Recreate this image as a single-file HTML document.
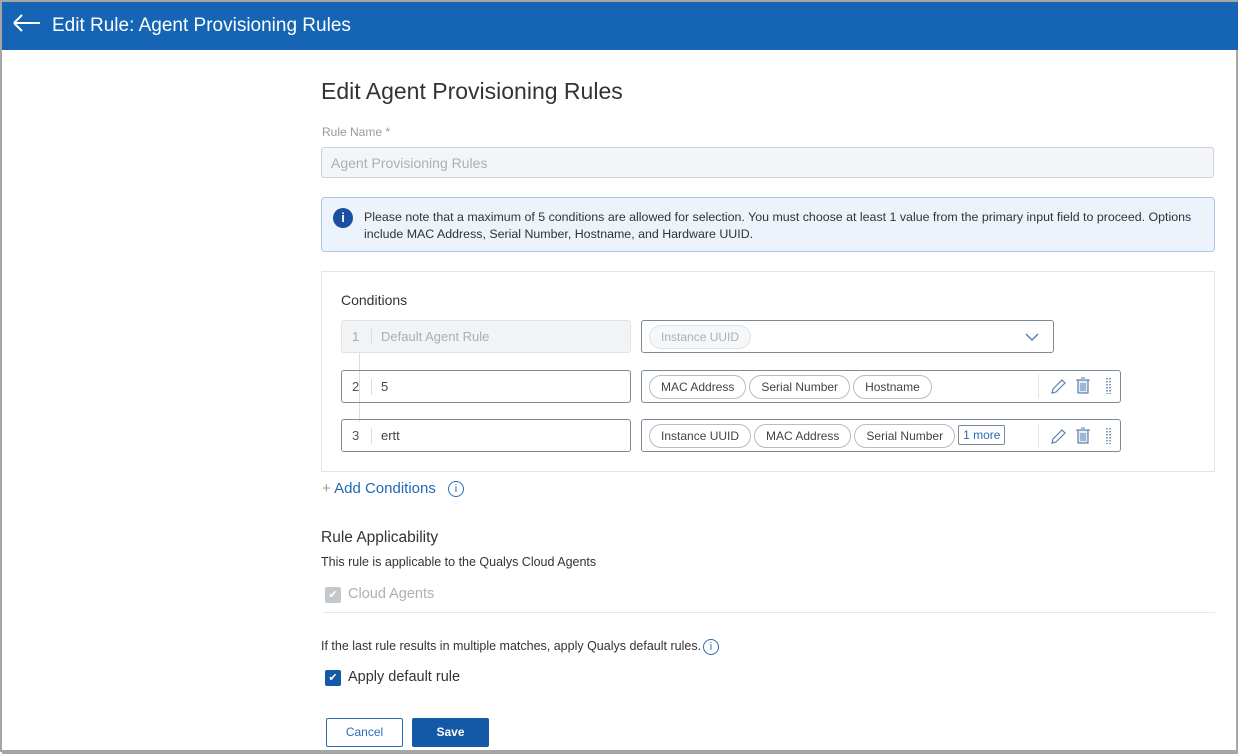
<!DOCTYPE html>
<html><head><style>
*{box-sizing:border-box;margin:0;padding:0}
body{width:1238px;height:752px;position:relative;overflow:hidden;background:#fff;font-family:"Liberation Sans",sans-serif;color:#333;border:2px solid #a6a6a6;border-bottom:none}
.a{position:absolute}
.hdr{left:0;top:0;width:1236px;height:48px;background:#1565b4;color:#fff}
.pill{display:inline-block;height:24px;line-height:22px;border:1px solid #b5bcc4;border-radius:12px;padding:0 11px;font-size:12px;color:#444;margin-right:3px}
.inp{border:1px solid #7d8a96;border-radius:3px;height:33px}
.num{position:absolute;left:10px;top:8px;font-size:13px;color:#555}
.sep{position:absolute;left:29px;top:8px;width:1px;height:16px;background:#ddd}
.txt{position:absolute;left:39px;top:8px;font-size:13px;color:#444}
</style></head><body>
<div class="a hdr">
<svg class="a" style="left:10px;top:11px" width="30" height="20" viewBox="0 0 30 20"><path d="M2 10H28M2 10L10 2M2 10L10 18" stroke="#fff" stroke-width="2" fill="none"/></svg>
<div class="a" style="left:50px;top:13px;font-size:19px">Edit Rule: Agent Provisioning Rules</div>
</div>
<div class="a" style="left:319px;top:76px;font-size:23px;color:#333">Edit Agent Provisioning Rules</div>
<div class="a" style="left:320px;top:123px;font-size:12px;color:#999">Rule Name *</div>
<div class="a" style="left:319px;top:145px;width:893px;height:31px;background:#f3f5f6;border:1px solid #ccd2d7;border-radius:3px;font-size:14px;color:#aab0b6;padding:7px 9px">Agent Provisioning Rules</div>
<div class="a" style="left:319px;top:195px;width:894px;height:55px;background:#edf3fb;border:1px solid #a9c6e6;border-radius:4px"></div>
<div class="a" style="left:331px;top:206px;width:20px;height:20px;border-radius:50%;background:#1c4fa0;color:#fff;font-size:13px;font-weight:bold;text-align:center;line-height:20px">i</div>
<div class="a" style="left:362px;top:207px;font-size:12.4px;line-height:17px;color:#333;width:840px">Please note that a maximum of 5 conditions are allowed for selection. You must choose at least 1 value from the primary input field to proceed. Options include MAC Address, Serial Number, Hostname, and Hardware UUID.</div>
<div class="a" style="left:319px;top:269px;width:894px;height:201px;border:1px solid #e2e4e6"></div>
<div class="a" style="left:339px;top:290px;font-size:14px;color:#333">Conditions</div>
<div class="a" style="left:357px;top:350px;width:1px;height:70px;background:#ddd"></div>
<div class="a inp" style="left:339px;top:318px;width:290px;background:#f1f3f4;border-color:#e0e3e6"><span class="num" style="color:#aaa">1</span><span class="sep"></span><span class="txt" style="color:#aab0b6">Default Agent Rule</span></div>
<div class="a inp" style="left:639px;top:318px;width:413px;padding:4px 7px"><span class="pill" style="color:#aab0b6;border-color:#e0e3e6;background:#f6f7f8">Instance UUID</span>
<svg class="a" style="right:14px;top:12px" width="14" height="9"><path d="M1 1L7 7L13 1" stroke="#5b7fae" stroke-width="1.5" fill="none"/></svg></div>
<div class="a inp" style="left:339px;top:368px;width:290px"><span class="num">2</span><span class="sep"></span><span class="txt">5</span></div>
<div class="a inp" style="left:639px;top:368px;width:480px;padding:4px 7px"><span class="pill">MAC Address</span><span class="pill">Serial Number</span><span class="pill">Hostname</span></div>
<div class="a inp" style="left:339px;top:417px;width:290px"><span class="num">3</span><span class="sep"></span><span class="txt">ertt</span></div>
<div class="a inp" style="left:639px;top:417px;width:480px;padding:4px 7px"><span class="pill">Instance UUID</span><span class="pill">MAC Address</span><span class="pill">Serial Number</span><span style="display:inline-block;border:1px solid #7d8a96;border-radius:2px;font-size:12px;color:#2c6cb5;padding:2px 4px;vertical-align:top;margin-top:1px">1 more</span></div>
<div class="a" style="left:1036px;top:372px;width:1px;height:24px;background:#e0e3e6"></div>
<div class="a" style="left:1036px;top:422px;width:1px;height:24px;background:#e0e3e6"></div>
<svg class="a" style="left:1048px;top:374px" width="70" height="70">
<g id="ic"><path d="M2 17L3 13L12 4L15 7L6 16Z" stroke="#5b7fae" fill="none" stroke-width="1.2"/>
<rect x="28" y="4" width="10" height="13" stroke="#5b7fae" fill="#e3edf8" stroke-width="1.2"/><path d="M26 4H40M31 2H35M31 7V15M33 7V15M35 7V15" stroke="#5b7fae" stroke-width="1"/>
<path d="M57 2V18M60 2V18" stroke="#5b7fae" stroke-width="1.5" stroke-dasharray="1.5 1.5"/></g>
<use href="#ic" y="50"/></svg>
<div class="a" style="left:320px;top:478px;font-size:15px;color:#1f69b8"><span style="color:#999">+</span> Add Conditions</div>
<div class="a" style="left:446px;top:479px;width:16px;height:16px;border:1.3px solid #2c6cb5;border-radius:50%;color:#2c6cb5;font-size:11px;text-align:center;line-height:14px">i</div>
<div class="a" style="left:319px;top:527px;font-size:15.5px;color:#333">Rule Applicability</div>
<div class="a" style="left:319px;top:553px;font-size:12.5px;color:#333">This rule is applicable to the Qualys Cloud Agents</div>
<div class="a" style="left:323px;top:585px;width:16px;height:16px;background:#c3c8cd;border-radius:2px;color:#fff;font-size:11px;text-align:center;line-height:16px">✔</div>
<div class="a" style="left:346px;top:584px;font-size:14.5px;color:#aab0b6">Cloud Agents</div>
<div class="a" style="left:321px;top:610px;width:892px;height:1px;background:#e6e8ea"></div>
<div class="a" style="left:319px;top:637px;font-size:12.5px;color:#333">If the last rule results in multiple matches, apply Qualys default rules.</div>
<div class="a" style="left:701px;top:637px;width:16px;height:16px;border:1.3px solid #2c6cb5;border-radius:50%;color:#2c6cb5;font-size:11px;text-align:center;line-height:14px">i</div>
<div class="a" style="left:323px;top:668px;width:16px;height:16px;background:#1458a8;border-radius:2px;color:#fff;font-size:11px;text-align:center;line-height:16px">✔</div>
<div class="a" style="left:346px;top:667px;font-size:14.5px;color:#333">Apply default rule</div>
<div class="a" style="left:324px;top:716px;width:77px;height:29px;border:1px solid #2c6cb5;border-radius:2px;color:#2c6cb5;font-size:12px;text-align:center;line-height:27px">Cancel</div>
<div class="a" style="left:410px;top:716px;width:77px;height:29px;background:#1458a8;border-radius:2px;color:#fff;font-size:12px;font-weight:bold;text-align:center;line-height:29px">Save</div>
<div class="a" style="left:0;top:748px;width:1238px;height:4px;background:#a6a6a6"></div>
</body></html>
